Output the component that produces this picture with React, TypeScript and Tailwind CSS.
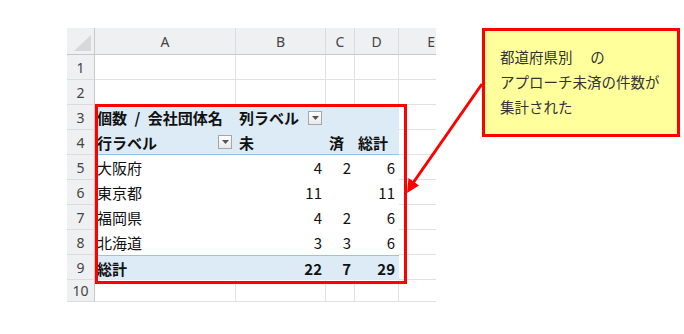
import React from "react";

type Cell = {
    text?: string;
    bold?: boolean;
    right?: boolean;
    filter?: boolean;
};

type Row = {
    no: number;
    h: string;
    pivot?: "head" | "body" | "total";
    line?: "bottom";
    cells?: Cell[];
};

const rows: Row[] = [
    { no: 1, h: "h-[25px]" },
    { no: 2, h: "h-[25px]" },
    {
        no: 3,
        h: "h-[25px]",
        pivot: "head",
        cells: [
            { text: "個数\u2002/\u2002会社団体名", bold: true },
            { text: "列ラベル", bold: true, filter: true },
            {},
            {},
        ],
    },
    {
        no: 4,
        h: "h-[25px]",
        pivot: "head",
        line: "bottom",
        cells: [
            { text: "行ラベル", bold: true, filter: true },
            { text: "未", bold: true },
            { text: "済", bold: true },
            { text: "総計", bold: true },
        ],
    },
    {
        no: 5,
        h: "h-[25px]",
        pivot: "body",
        cells: [{ text: "大阪府" }, { text: "4", right: true }, { text: "2", right: true }, { text: "6", right: true }],
    },
    {
        no: 6,
        h: "h-[25px]",
        pivot: "body",
        cells: [{ text: "東京都" }, { text: "11", right: true }, {}, { text: "11", right: true }],
    },
    {
        no: 7,
        h: "h-[25px]",
        pivot: "body",
        cells: [{ text: "福岡県" }, { text: "4", right: true }, { text: "2", right: true }, { text: "6", right: true }],
    },
    {
        no: 8,
        h: "h-[25px]",
        pivot: "body",
        cells: [{ text: "北海道" }, { text: "3", right: true }, { text: "3", right: true }, { text: "6", right: true }],
    },
    {
        no: 9,
        h: "h-[25px]",
        pivot: "total",
        cells: [
            { text: "総計", bold: true },
            { text: "22", bold: true, right: true },
            { text: "7", bold: true, right: true },
            { text: "29", bold: true, right: true },
        ],
    },
    { no: 10, h: "h-[22px]" },
];

const letters = ["A", "B", "C", "D", "E"];

const FilterButton = () => (
    <span className="flex shrink-0 items-center justify-center size-[14px] border border-[#a6a6a6] bg-gradient-to-b from-white to-[#e9e9e9]">
        <svg width="7" height="4" viewBox="0 0 7 4">
            <path d="M0 0h7L3.5 4z" fill="#555" />
        </svg>
    </span>
);

const GridCell = ({ last }: { last?: boolean }) => (
    <div className={`border-b border-[#e1e1e1] ${last ? "" : "border-r"}`} />
);

const PivotCell = ({ cell, row, col }: { cell: Cell; row: Row; col: number }) => {
    const fill = row.pivot === "body" ? "bg-white" : "bg-[#ddebf7]";
    const line =
        row.line === "bottom"
            ? "border-b border-[#9bc2e6]"
            : row.pivot === "total"
            ? "border-t border-[#9bc2e6]"
            : "";
    return (
        <div
            className={`flex items-center min-w-0 ${fill} ${line} ${
                cell.right ? "justify-end pr-[4px]" : col === 0 ? "justify-between pl-[2px] pr-[4px]" : "justify-between pl-[3px] pr-[4px]"
            } text-[15px] text-[#111] ${cell.bold ? "font-bold" : ""}`}
        >
            {cell.text && <span className="whitespace-pre leading-none">{cell.text}</span>}
            {cell.filter && <FilterButton />}
        </div>
    );
};

const Sheet = () => (
    <div className="grid grid-cols-[28px_141px_90px_29px_44px_37px] w-[369px] font-['Noto_Sans_CJK_JP',sans-serif]">
        {/* corner + column letters */}
        <div className="relative h-[27px] bg-[#eff0f2] border-r border-b border-[#c8c8c8]">
            <svg className="absolute right-[3px] bottom-[3px]" width="17" height="16" viewBox="0 0 17 16">
                <path d="M17 0V16H0z" fill="#d7d8da" />
            </svg>
        </div>
        {letters.map((l, i) => (
            <div
                key={l}
                className={`flex items-center h-[27px] bg-[#eff0f2] border-b border-[#c8c8c8] font-['Noto_Sans',sans-serif] text-[14px] text-[#444] ${
                    i < 4 ? "justify-center border-r border-r-[#dadcdf]" : "justify-end overflow-hidden pr-[1px]"
                }`}
            >
                {l}
            </div>
        ))}

        {rows.map((row) => (
            <React.Fragment key={row.no}>
                <div
                    className={`flex items-center justify-center ${row.h} bg-[#eff0f2] border-r border-[#c8c8c8] border-b border-b-[#dcdcdc] font-['Noto_Sans',sans-serif] text-[14px] text-[#444]`}
                >
                    {row.no}
                </div>
                {row.cells
                    ? row.cells.map((c, i) => <PivotCell key={i} cell={c} row={row} col={i} />)
                    : [0, 1, 2, 3].map((i) => <GridCell key={i} />)}
                <GridCell last />
            </React.Fragment>
        ))}
    </div>
);

const Callout = () => (
    <div className="w-[198px] h-[109px] border-[3px] border-[#ff0000] bg-[#ffff9c] pl-[15px] pt-[13px] font-['Noto_Sans_CJK_JP',sans-serif] text-[14.5px] leading-[25px] text-[#333]">
        <p>都道府県別　 の</p>
        <p>アプローチ未済の件数が</p>
        <p>集計された</p>
    </div>
);

export default function App() {
    return (
        <div className="relative w-[684px] h-[334px] overflow-hidden bg-white">
            <div className="flex items-start gap-[46px] pt-[28px] pl-[67px]">
                <Sheet />
                <Callout />
            </div>

            {/* highlight frame around the pivot table */}
            <div className="absolute left-[95px] top-[104px] w-[312px] h-[180px] border-[3px] border-[#ff0000] pointer-events-none" />

            {/* arrow from the note to the table */}
            <svg className="absolute inset-0 pointer-events-none" width="684" height="334" viewBox="0 0 684 334">
                <line x1="482" y1="84" x2="413" y2="183" stroke="#ff0000" strokeWidth="3" />
                <path d="M407 193 L408.5 178 L419 185.5 Z" fill="#ff0000" />
            </svg>
        </div>
    );
}
